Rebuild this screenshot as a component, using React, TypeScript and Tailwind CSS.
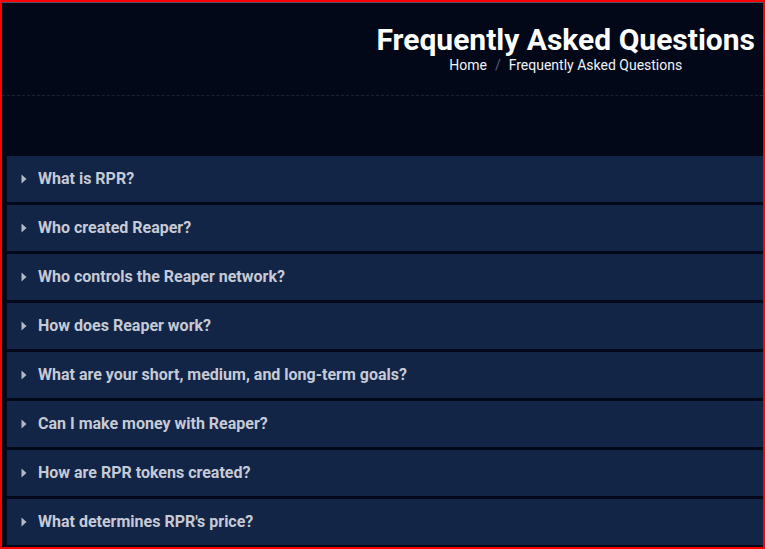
const questions = [
  'What is RPR?',
  'Who created Reaper?',
  'Who controls the Reaper network?',
  'How does Reaper work?',
  'What are your short, medium, and long-term goals?',
  'Can I make money with Reaper?',
  'How are RPR tokens created?',
  "What determines RPR's price?",
];

function Caret() {
  return (
    <svg width="6" height="10" viewBox="0 0 6 10" className="shrink-0">
      <path d="M0.5 0.5 L5.5 5 L0.5 9.5 Z" fill="#b4b9c4" />
    </svg>
  );
}

export default function App() {
  return (
    <div
      className="w-[765px] h-[549px] overflow-hidden border-2 border-[#ff0000] bg-[#020817] flex flex-col"
      style={{ fontFamily: 'Roboto, "Liberation Sans", sans-serif' }}
    >
      <div className="h-px bg-[#4b5465] shrink-0" />

      {/* page header */}
      <header className="shrink-0">
        <div className="flex justify-end pr-[8px] pt-[22px]">
          <div className="flex flex-col items-center">
            <h1 className="text-[30px] leading-[30px] font-bold text-white">Frequently Asked Questions</h1>
            <nav className="flex items-center gap-[8px] text-[14px] leading-[20px] text-[#f1f3f7]">
              <span>Home</span>
              <span className="text-[#5b6272]">/</span>
              <span>Frequently Asked Questions</span>
            </nav>
          </div>
        </div>
        <div className="mt-[20px] border-t border-dashed border-[#1b2334]" />
        <div className="h-[60px]" />
      </header>

      {/* faq list */}
      <div className="flex flex-col gap-[3px] pl-[5px]">
        {questions.map((q) => (
          <button
            key={q}
            className="h-[46px] shrink-0 bg-[#122546] flex items-center gap-[11px] pl-[14px] text-left"
          >
            <Caret />
            <span className="text-[16px] font-bold text-[#c6cad6]">{q}</span>
          </button>
        ))}
      </div>
    </div>
  );
}
